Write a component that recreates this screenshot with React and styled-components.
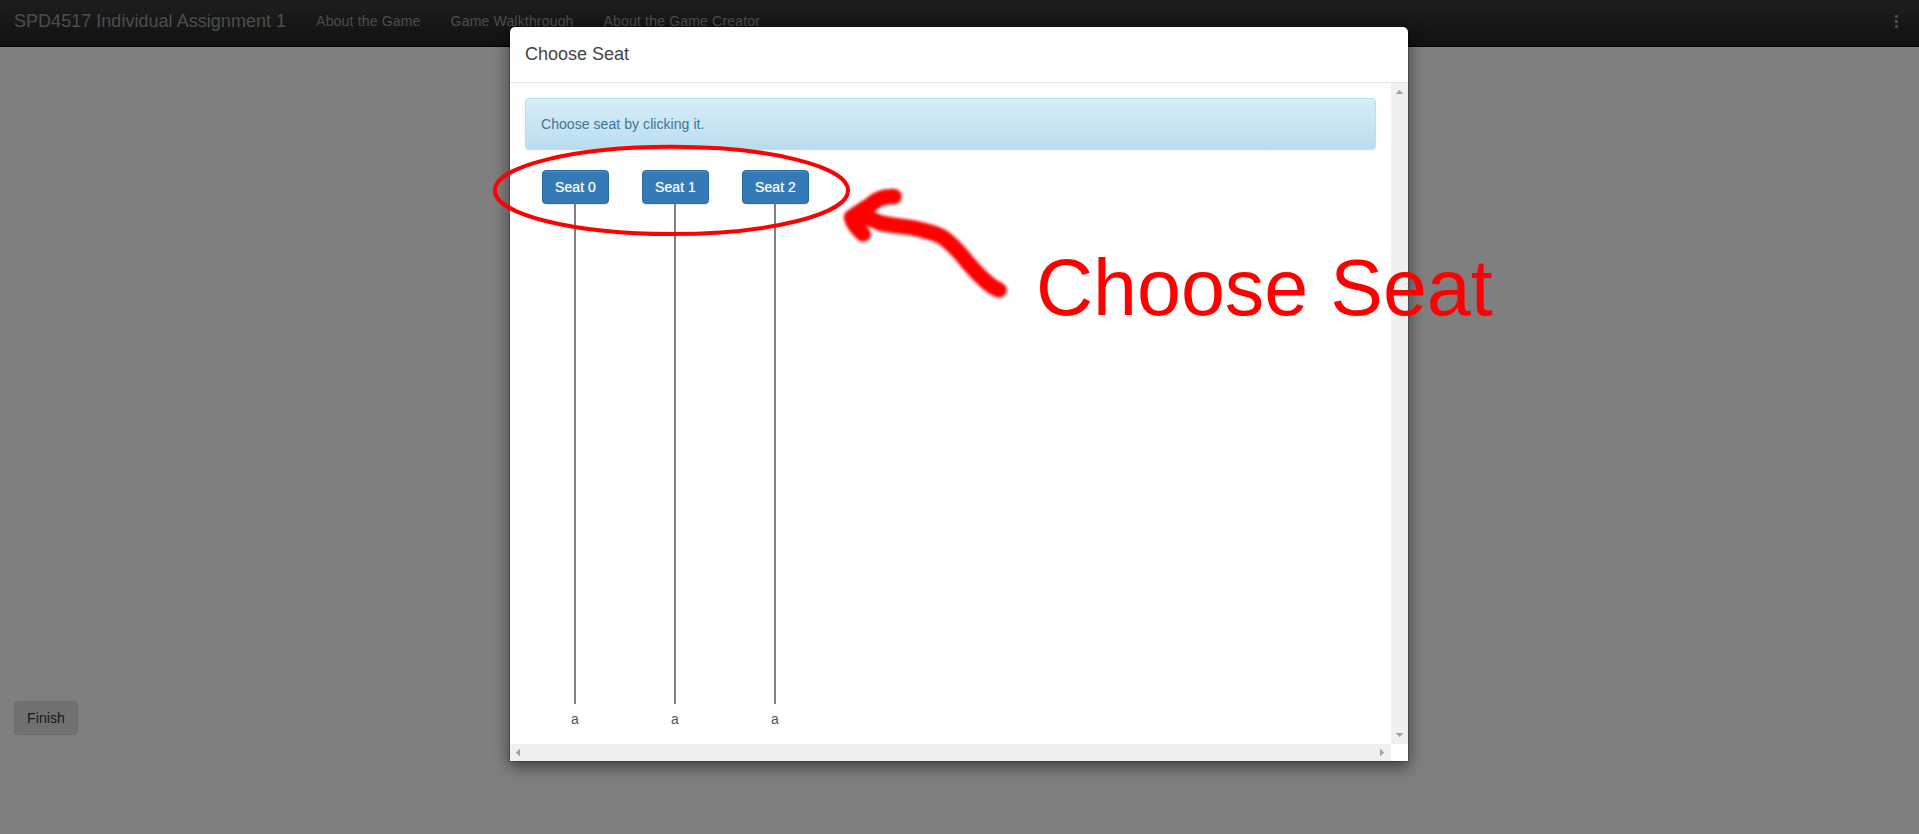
import React from "react";
import styled, { createGlobalStyle } from "styled-components";

const GlobalStyle = createGlobalStyle`
  * { box-sizing: border-box; }
  body {
    margin: 0;
    background: #fff;
    color: #333;
    font: 14px/20px "Liberation Sans", Arial, sans-serif;
    overflow: hidden;
  }
`;

const Page = styled.div`
  position: relative;
  display: flex;
  flex-direction: column;
  height: 834px;
  overflow: hidden;
`;

const Navbar = styled.nav`
  display: flex;
  align-items: center;
  height: 47px;
  padding: 0 20px 4px 14px;
  border-bottom: 1px solid #080808;
  background: linear-gradient(#3c3c3c, #222);
  color: #9d9d9d;
  text-shadow: 0 -1px 0 rgba(0, 0, 0, 0.25);
`;

const Brand = styled.span`
  margin-right: 15px;
  font-size: 18px;
  letter-spacing: 0.03px;
`;

const NavLink = styled.a`
  padding: 0 15px;
  letter-spacing: 0.18px;
`;

const MoreIcon = styled.svg`
  margin-left: auto;
  display: block;
`;

const Main = styled.main`
  flex: 1;
  display: flex;
  align-items: flex-end;
  padding: 0 14px 99px;
`;

const Button = styled.button`
  width: ${(p) => (p.$primary ? "67px" : "64px")};
  height: 34px;
  margin-left: ${(p) => (p.$primary ? "1px" : "0")};
  padding: 0;
  border: 1px solid ${(p) => (p.$primary ? "#2c6ca5" : "#dbdbdb")};
  border-radius: 4px;
  background: ${(p) => (p.$primary ? "#337ab7" : "#e0e0e0")};
  color: ${(p) => (p.$primary ? "#fff" : "#333")};
  font: inherit;
  letter-spacing: 0.08px;
  text-shadow: ${(p) => (p.$primary ? "0 0 1px rgba(255, 255, 255, 0.6)" : "none")};
  box-shadow: ${(p) => (p.$primary ? "inset 0 1px 0 rgba(255,255,255,.15), 0 1px 1px rgba(0,0,0,.075)" : "none")};
`;

const Backdrop = styled.div`
  position: absolute;
  inset: 0;
  padding: 26px 0 0 509px;
  background: rgba(0, 0, 0, 0.5);
`;

const Dialog = styled.section`
  display: flex;
  flex-direction: column;
  width: 900px;
  height: 736px;
  border: 1px solid rgba(0, 0, 0, 0.2);
  border-radius: 6px 6px 0 0;
  background: #fff;
  background-clip: padding-box;
  box-shadow: 0 5px 15px rgba(0, 0, 0, 0.5);
`;

const DialogHeader = styled.header`
  height: 56px;
  padding: 14px 15px;
  border-bottom: 1px solid #e5e5e5;
  font-size: 18px;
  line-height: 26px;
  color: #444;
`;

const DialogBody = styled.div`
  flex: 1;
  display: grid;
  grid-template: 1fr 17px / 1fr 17px;
`;

const Content = styled.div`
  padding: 15px;
`;

const Alert = styled.div`
  height: 52px;
  margin-bottom: 20px;
  padding: 15px;
  border: 1px solid #b2e3ee;
  border-radius: 4px;
  background: linear-gradient(#d9edf7, #b9def0);
  box-shadow: inset 0 1px 0 rgba(255, 255, 255, 0.25), 0 1px 2px rgba(0, 0, 0, 0.05);
  color: #3c7894;
  letter-spacing: 0.06px;
`;

const Seats = styled.div`
  display: flex;
`;

const Seat = styled.div`
  display: flex;
  flex-direction: column;
  align-items: center;
  width: 100px;
  color: #555;
`;

const SeatLine = styled.div`
  width: 2px;
  height: 500px;
  margin-bottom: 5px;
  background: #808080;
`;

const Scrollbar = styled.div`
  display: flex;
  flex-direction: ${(p) => (p.$vertical ? "column" : "row")};
  justify-content: space-between;
  align-items: center;
  padding: ${(p) => (p.$vertical ? "7px 0" : "0 7px 0 6px")};
  background: #f0f0f0;
`;

const Annotation = styled.svg`
  position: absolute;
  inset: 0;
`;

const Note = styled.div`
  position: absolute;
  left: 1036px;
  top: 243px;
  color: #f00;
  font-size: 79px;
  line-height: 90px;
  white-space: nowrap;
`;

const arrows = {
  up: [7, 4, "M3 0h1v1h1v1h1v1h1v1H0V3h1V2h1V1h1z"],
  down: [7, 4, "M0 0h7v1H6v1H5v1H4v1H3V3H2V2H1V1H0z"],
  left: [4, 7, "M4 0v7H3V6H2V5H1V4H0V3h1V2h1V1h1V0z"],
  right: [4, 7, "M0 0h1v1h1v1h1v1h1v1H3v1H2v1H1v1H0z"],
};

function Arrow({ dir }) {
  const [w, h, d] = arrows[dir];
  return (
    <svg width={w} height={h}>
      <path d={d} fill="#a3a3a3" />
    </svg>
  );
}

export default function App() {
  return (
    <Page>
      <GlobalStyle />
      <Navbar>
        <Brand>SPD4517 Individual Assignment 1</Brand>
        <NavLink>About the Game</NavLink>
        <NavLink>Game Walkthrough</NavLink>
        <NavLink>About the Game Creator</NavLink>
        <MoreIcon width="5" height="14" fill="#9d9d9d">
          <rect x="1" y="1" width="3" height="3" rx="0.8" />
          <rect x="1" y="6" width="3" height="3" rx="0.8" />
          <rect x="1" y="11" width="3" height="3" rx="0.8" />
        </MoreIcon>
      </Navbar>
      <Main>
        <Button>Finish</Button>
      </Main>
      <Backdrop>
        <Dialog>
          <DialogHeader>Choose Seat</DialogHeader>
          <DialogBody>
            <Content>
              <Alert>Choose seat by clicking it.</Alert>
              <Seats>
                {[0, 1, 2].map((n) => (
                  <Seat key={n}>
                    <Button $primary>Seat {n}</Button>
                    <SeatLine />
                    a
                  </Seat>
                ))}
              </Seats>
            </Content>
            <Scrollbar $vertical>
              <Arrow dir="up" />
              <Arrow dir="down" />
            </Scrollbar>
            <Scrollbar>
              <Arrow dir="left" />
              <Arrow dir="right" />
            </Scrollbar>
          </DialogBody>
        </Dialog>
      </Backdrop>
      <Annotation width="1919" height="834" fill="none" stroke="#f00">
        <defs>
          <filter id="brush" x="-10%" y="-10%" width="120%" height="120%">
            <feGaussianBlur stdDeviation="1.7" />
          </filter>
        </defs>
        <ellipse cx="671.5" cy="190.4" rx="176.6" ry="43.6" strokeWidth="4" />
        <path
          filter="url(#brush)"
          strokeWidth="15.5"
          strokeLinecap="round"
          strokeLinejoin="round"
          d="M894 196.500Q882 196 874 202Q870 206 864 209L851.500 217.500Q853 225 863 234M856 214Q870 218 879 222.500C890 226 898 225 914 228C926 231 940 234 945 239C953 245 961 254 968 263C976 272 988 286 999 290"
        />
      </Annotation>
      <Note>Choose Seat</Note>
    </Page>
  );
}
